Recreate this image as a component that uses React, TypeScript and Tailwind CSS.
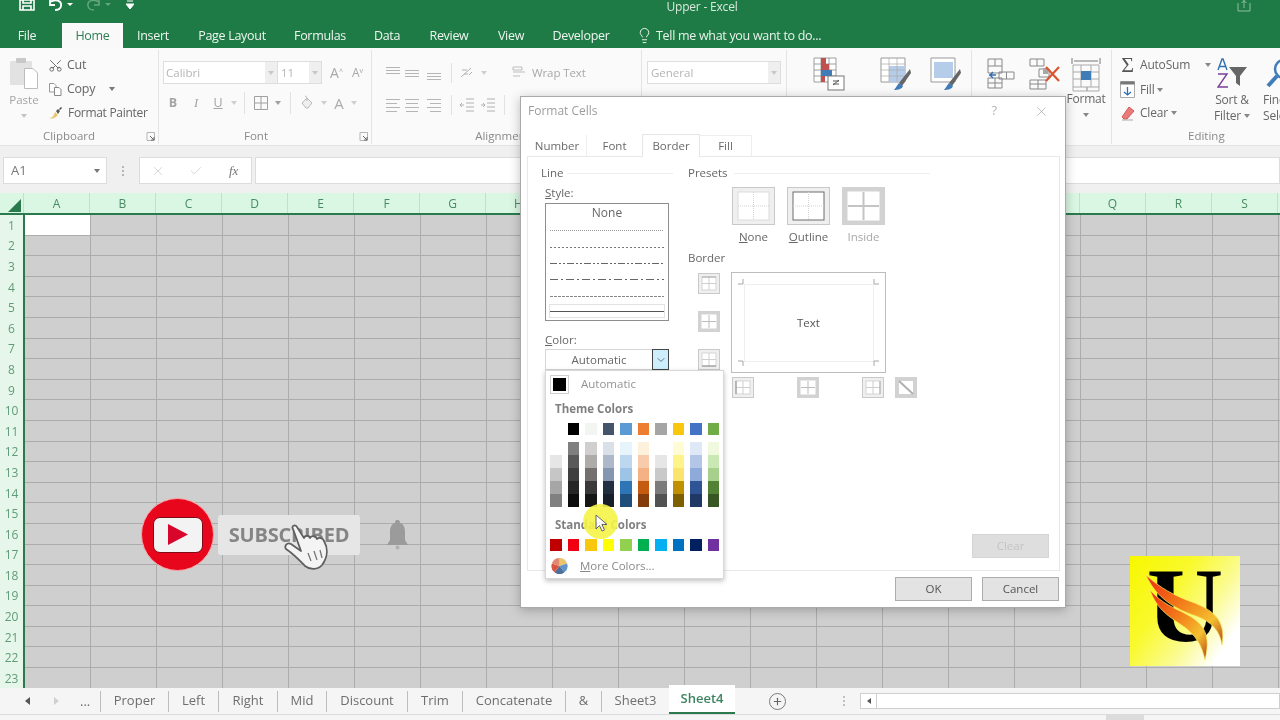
import React from "react";
import { Scissors, Lightbulb, X, Check, ChevronDown, Plus } from "lucide-react";

const COLS = "ABCDEFGHIJKLMNOPQRS".split("");
const ROWS = Array.from({ length: 23 }, (_, i) => i + 1);

const Caret = ({ c = "#9a9a9a" }: { c?: string }) => (
  <svg width="6" height="4" viewBox="0 0 6 4" className="shrink-0"><path d="M0 0h6L3 4z" fill={c} /></svg>
);

const Lines = ({ a }: { a: "l" | "c" | "r" | "t" | "m" | "b" }) => {
  const y = a === "t" ? [2, 5, 8] : a === "b" ? [8, 11, 14] : a === "m" ? [5, 8, 11] : [2, 6, 10, 14];
  return (
    <svg width="16" height="16" viewBox="0 0 16 16" className="shrink-0">
      {y.map((v, i) => {
        const short = y.length === 4 && i % 2 === 1;
        const x1 = a === "r" && short ? 4 : a === "c" && short ? 2 : 1;
        const x2 = a === "l" && short ? 12 : a === "c" && short ? 14 : 15;
        return <path key={v} d={`M${x1} ${v + 0.5}H${x2}`} stroke="#b5b5b5" />;
      })}
    </svg>
  );
};

const Launcher = () => (
  <svg width="9" height="9" viewBox="0 0 9 9"><path d="M1 .5H8.500V8M1 .5V8.500H8.500" fill="none" stroke="#b5b5b5" /><path d="M4 4l4 4M5 8h3V5" stroke="#666" fill="none" /></svg>
);

const Vsep = ({ h = 22 }: { h?: number }) => <div className="w-px bg-[#e2e2e2] shrink-0" style={{ height: h }} />;

const Group = ({ w, label, children, launcher, labelClass }: { w: number; label?: string; children: React.ReactNode; launcher?: boolean; labelClass?: string }) => (
  <div className="flex flex-col shrink-0 border-r border-[#e4e4e4] my-[2px] h-[94px]" style={{ width: w }}>
    <div className="h-[78px] flex">{children}</div>
    <div className={`relative h-[16px] flex items-center justify-center text-[11.500px] text-[#8a8a8a] ${labelClass ?? ""}`}>
      {label}
      {launcher && <span className="absolute right-[3px] top-[4px] flex"><Launcher /></span>}
    </div>
  </div>
);

const TopTab = ({ w, t, active }: { w: number; t: string; active?: boolean }) => (
  <div
    className={`h-[25px] pt-[1px] flex items-center justify-center shrink-0 text-[12.500px] tracking-[-0.3px] ${active ? "bg-[#f9f9f9] text-[#2f7d52]" : "text-[#eef5f0]"}`}
    style={{ width: w }}
  >
    {t}
  </div>
);

const StyleLine = ({ dash, h = 1, c = "#666" }: { dash?: string; h?: number; c?: string }) => (
  <svg width="114" height={h + 2} className="block mx-auto">
    <line x1="0" x2="114" y1={1 + h / 2} y2={1 + h / 2} stroke={c} strokeWidth={h} strokeDasharray={dash} />
  </svg>
);

const Preset = ({ kind }: { kind: "none" | "outline" | "inside" }) => (
  <svg width="43" height="38" viewBox="0 0 43 38" className="block">
    <rect x=".5" y=".5" width="42" height="37" fill={kind === "inside" ? "#d2d2d2" : "#efefef"} stroke={kind === "inside" ? "#d2d2d2" : "#c9c9c9"} />
    <rect x="6" y="5" width="31" height="28" fill="#fff" stroke={kind === "outline" ? "#6d6d6d" : kind === "inside" ? "#fff" : "#dcdcdc"} />
    <path d="M21.500 5V33M6 19H37" stroke={kind === "inside" ? "#c4c4c4" : "#d4d4d4"} strokeWidth={kind === "inside" ? 2 : 1} strokeDasharray={kind === "inside" ? undefined : "1 1"} />
  </svg>
);

const BorderBtn = ({ kind }: { kind: string }) => {
  const grey = kind === "mid" || kind === "v";
  return (
    <svg width="22" height="21" viewBox="0 0 22 21" className="block">
      <rect x=".5" y=".5" width="21" height="20" fill={grey ? "#d2d2d2" : "#efefef"} stroke={grey ? "#d2d2d2" : "#c9c9c9"} />
      <rect x="4" y="4" width="14" height="13" fill="#fff" stroke={grey ? "#fff" : "#d5d5d5"} />
      <path d="M11 4V17M4 10.500H18" stroke={grey ? "#bdbdbd" : "#cfcfcf"} />
      {kind === "top" && <path d="M4 4H18" stroke="#aaa" />}
      {kind === "bottom" && <path d="M4 17H18" stroke="#888" />}
      {kind === "left" && <path d="M4 4V17" stroke="#888" />}
      {kind === "right" && <path d="M18 4V17" stroke="#aaa" />}
      {kind === "diag" && <rect x=".5" y=".5" width="21" height="20" fill="#d2d2d2" stroke="#d2d2d2" />}
      {kind === "diag" && <rect x="4" y="4" width="14" height="13" fill="#fff" />}
      {kind === "diag" && <path d="M4 4L18 17" stroke="#b0b0b0" strokeWidth="2" />}
    </svg>
  );
};

const THEME: (string | null)[][] = [
  ["#ffffff", "#ffffff", "#e6e6e6", "#c6c6c6", "#a6a6a6", "#808080"],
  ["#000000", "#7f7f7f", "#595959", "#3f3f3f", "#262626", "#0d0d0d"],
  ["#f3f5f3", "#d0cece", "#aeabab", "#757070", "#3a3838", "#171616"],
  ["#44546a", "#d9e0e8", "#adb9ca", "#8496b0", "#222f40", "#161f2a"],
  ["#5b9bd5", "#e8f4fb", "#bdd7ee", "#9dc3e6", "#2e75b5", "#1e4e79"],
  ["#ed7d31", "#fdf1dc", "#f8cbad", "#f4b183", "#c55a11", "#833c0b"],
  ["#a5a5a5", "#ffffff", "#e6e6e6", "#c9c9c9", "#7b7b7b", "#525252"],
  ["#f9c80e", "#fffbd5", "#fff48a", "#fbe46c", "#bf9000", "#7f6000"],
  ["#4472c4", "#dfe8f6", "#b4c6e7", "#8eaadb", "#2f5496", "#1f3864"],
  ["#70ad47", "#f0f8dd", "#c9e8b3", "#a8d08d", "#538135", "#375623"],
];
const STD = ["#c00000", "#f00010", "#f9c80e", "#ffff00", "#92d050", "#00b050", "#00b0f0", "#0070c0", "#002060", "#7030a0"];

const SHEETS: [string, number][] = [["Proper", 68], ["Left", 50], ["Right", 59], ["Mid", 49], ["Discount", 81], ["Trim", 55], ["Concatenate", 103], ["&", 36]];

export default function App() {
  return (
    <div className="relative w-[1280px] h-[720px] overflow-hidden bg-white font-['Open_Sans',sans-serif] flex flex-col blur-[0.4px]">
      {/* Title + tabs */}
      <div className="h-[48px] bg-[#1f7b45] shrink-0 flex flex-col">
        <div className="h-[23px] flex items-start">
          <div className="flex items-center h-[11px] gap-[12px] pl-[19px] w-[172px] shrink-0">
            <svg width="16" height="11" viewBox="0 0 16 11"><path d="M1 0H15V10H1zM4 0V3H12V0M4 10V6H12V10" fill="none" stroke="#fff" strokeWidth="1.600" /></svg>
            <svg width="26" height="12" viewBox="0 0 26 12"><path d="M3 2C8-1 15 0 14 6 13.500 9 11 10 8 10M3 0V5H8" fill="none" stroke="#fff" strokeWidth="1.800" /><path d="M20 3h6l-3 3z" fill="#fff" /></svg>
            <svg width="28" height="12" viewBox="0 0 28 12" className="opacity-40"><path d="M14 2C9-1 2 0 3 6 3.500 9 6 10 9 10M14 0V5H9" fill="none" stroke="#cfe5d8" strokeWidth="1.500" /><path d="M20 3h6l-3 3z" fill="#cfe5d8" /></svg>
            <svg width="8" height="11" viewBox="0 0 8 11" className="ml-[1px]"><path d="M1 1H7M0 4h8L4 9z" stroke="#fff" fill="#fff" /></svg>
          </div>
          <div className="w-[1060px] shrink-0 text-center text-[12px] tracking-[-0.2px] text-[#d8e8de] leading-[14px] whitespace-nowrap">Upper - Excel</div>
          <div className="ml-[5px]">
            <svg width="14" height="12" viewBox="0 0 14 12"><path d="M1 3V11H13V3M7 8V0M4.500 3L7 .5 9.500 3" fill="none" stroke="#8fbfa3" /></svg>
          </div>
        </div>
        <div className="h-[25px] flex items-center">
          <div className="w-[8px]" />
          <TopTab w={38} t="File" />
          <div className="w-[16px]" />
          <TopTab w={61} t="Home" active />
          <TopTab w={60} t="Insert" />
          <TopTab w={98} t="Page Layout" />
          <TopTab w={78} t="Formulas" />
          <TopTab w={56} t="Data" />
          <TopTab w={68} t="Review" />
          <TopTab w={56} t="View" />
          <TopTab w={84} t="Developer" />
          <Lightbulb size={17} strokeWidth={1.4} className="text-[#e8f2ec] ml-[13px] shrink-0" />
          <div className="ml-[3px] pt-[1px] text-[12.500px] tracking-[-0.3px] text-[#e8f2ec]">Tell me what you want to do...</div>
        </div>
      </div>

      {/* Ribbon */}
      <div className="h-[98px] shrink-0 bg-[#fafafa] border-b border-[#e3e3e3] flex items-start overflow-hidden">
        <Group w={159} label="Clipboard" launcher labelClass="pr-[20px]">
          <div className="w-[48px] flex flex-col items-center pt-[7px] shrink-0">
            <svg width="30" height="32" viewBox="0 0 30 32">
              <rect x="1" y="4" width="22" height="24" fill="#e2e2e2" rx="1" />
              <rect x="7" y="1" width="10" height="5" fill="#c8c8c8" rx="1" />
              <path d="M15.500 11.500H24L28.500 16V31.500H15.500z" fill="#fff" stroke="#bcbcbc" />
            </svg>
            <div className="text-[11.500px] text-[#a4a4a4] leading-[14px] mt-[4px]">Paste</div>
            <div className="mt-[7px]"><Caret c="#c4c4c4" /></div>
          </div>
          <div className="flex flex-col pt-[3px] text-[#666] text-[12.500px] tracking-[-0.3px]">
            <div className="h-[24px] flex items-center gap-[4px]">
              <Scissors size={15} strokeWidth={1.5} className="text-[#666] -rotate-90" />
              <span>Cut</span>
            </div>
            <div className="h-[24px] flex items-center gap-[5px]">
              <svg width="14" height="14" viewBox="0 0 14 14"><path d="M1.500 1.500H6L8 3.500V10H1.500z" fill="#fff" stroke="#999" /><path d="M6.500 5.500H11L13 7.500V13.500H6.500z" fill="#fff" stroke="#888" /></svg>
              <span>Copy</span>
              <span className="ml-[9px]"><Caret c="#777" /></span>
            </div>
            <div className="h-[23px] flex items-center gap-[5px]">
              <svg width="15" height="14" viewBox="0 0 15 14"><path d="M1 12C5 12 6 9 7 6l3 3c-3 3-5 4-9 3z" fill="#ecc36a" /><path d="M8 5l2-2 2 2-2 3z" fill="#555" /><path d="M11 3l2-2 1 1-2 2z" fill="#444" /></svg>
              <span className="text-[12px]">Format Painter</span>
            </div>
          </div>
        </Group>

        <Group w={213} label="Font" launcher labelClass="pr-[18px]">
          <div className="flex flex-col pt-[11px] pl-[4px] gap-[8px]">
            <div className="flex items-center h-[23px]">
              <div className="w-[115px] h-[23px] border border-[#dedede] bg-white flex items-center justify-between text-[11.500px] text-[#b5b5b5] pl-[2px]">
                Calibri
                <div className="w-[12px] h-full bg-[#efefef] flex items-center justify-center"><Caret c="#c8c8c8" /></div>
              </div>
              <div className="w-[44px] h-[23px] border border-l-0 border-[#dedede] bg-white flex items-center justify-between text-[11.500px] text-[#b5b5b5] pl-[3px]">
                11
                <div className="w-[12px] h-full bg-[#efefef] flex items-center justify-center"><Caret c="#c8c8c8" /></div>
              </div>
              <div className="ml-[6px] w-[17px] text-[14px] text-[#a8a8a8] text-center leading-none">A<sup className="text-[7px]">^</sup></div>
              <div className="ml-[4px] w-[17px] text-[12px] text-[#a8a8a8] text-center leading-none">A<sup className="text-[7px]">v</sup></div>
            </div>
            <div className="flex items-center h-[22px] text-[#a4a4a4]">
              <div className="w-[22px] ml-[-1px] text-center text-[12.500px] font-bold">B</div>
              <div className="w-[22px] ml-[1px] text-center text-[12.500px] italic font-['Liberation_Serif',serif]">I</div>
              <div className="w-[22px] text-center text-[12.500px] underline">U</div>
              <span className="ml-[2px] mr-[7px]"><Caret c="#cfcfcf" /></span>
              <Vsep />
              <svg width="16" height="16" viewBox="0 0 16 16" className="ml-[8px]"><path d="M1.500 1.500H14.500V14.500H1.500zM8 1.500V14.500M1.500 8H14.500" fill="none" stroke="#a0a0a0" /></svg>
              <span className="ml-[6px] mr-[9px]"><Caret c="#a0a0a0" /></span>
              <Vsep />
              <svg width="17" height="16" viewBox="0 0 17 16" className="ml-[8px]"><path d="M3 8l5-5 5 5-4 5H7z" fill="#efefef" stroke="#b8b8b8" /><path d="M6 1C8 1 8 4 8 6" stroke="#b8b8b8" fill="none" /></svg>
              <span className="ml-[5px]"><Caret c="#cfcfcf" /></span>
              <span className="w-[22px] text-center text-[15px] ml-[1px] text-[#ababab]">A</span>
              <span className="ml-[1px]"><Caret c="#cfcfcf" /></span>
            </div>
          </div>
        </Group>

        <Group w={270} label="Alignment" labelClass="pr-[8px]">
          <div className="flex flex-col pt-[14px] pl-[13px] gap-[13px]">
            <div className="flex items-center h-[18px]">
              <Lines a="t" /><span className="w-[3px]" /><Lines a="m" /><span className="w-[6px]" /><Lines a="b" />
              <span className="w-[9px]" /><Vsep h={20} /><span className="w-[7px]" />
              <svg width="16" height="16" viewBox="0 0 16 16"><path d="M2 12L12 3M3 5h5M5 9h4M10 10l3-3" stroke="#b0b0b0" fill="none" /></svg>
              <span className="ml-[6px]"><Caret c="#cfcfcf" /></span>
              <svg width="18" height="16" viewBox="0 0 18 16" className="ml-[25px]"><path d="M1 2h9v3H1zM1 7h12M1 11h7" fill="none" stroke="#bdbdbd" /></svg>
              <span className="ml-[2px] text-[11.500px] text-[#a8a8a8] tracking-[-0.1px]">Wrap Text</span>
            </div>
            <div className="flex items-center h-[18px] mt-[1px]">
              <Lines a="l" /><span className="w-[3px]" /><Lines a="c" /><span className="w-[6px]" /><Lines a="r" />
              <span className="w-[9px]" /><Vsep h={20} /><span className="w-[7px]" />
              <svg width="16" height="16" viewBox="0 0 16 16"><path d="M7 2h8M7 6h8M7 10h8M7 14h8M5 8H1M3 6L1 8l2 2" stroke="#b0b0b0" fill="none" /></svg>
              <span className="w-[5px]" />
              <svg width="16" height="16" viewBox="0 0 16 16"><path d="M7 2h8M7 6h8M7 10h8M7 14h8M1 8h4M3 6l2 2-2 2" stroke="#b0b0b0" fill="none" /></svg>
              <span className="w-[8px]" /><Vsep h={20} />
            </div>
          </div>
        </Group>

        <Group w={145}>
          <div className="pt-[11px] pl-[5px]">
            <div className="w-[134px] h-[23px] border border-[#dedede] bg-white flex items-center justify-between text-[11.500px] text-[#b5b5b5] pl-[3px]">
              General
              <div className="w-[12px] h-full bg-[#efefef] flex items-center justify-center"><Caret c="#c8c8c8" /></div>
            </div>
          </div>
        </Group>

        <Group w={185}>
          <div className="flex pt-[7px] pl-[26px]">
            <svg width="32" height="34" viewBox="0 0 32 34" className="shrink-0">
              <path d="M1 1h22v24H1zM1 7h22M1 13h22M1 19h22M8 1v24M16 1v24" fill="#fff" stroke="#888" strokeWidth=".8" />
              <rect x="8" y="1" width="5" height="6" fill="#c0504d" /><rect x="8" y="7" width="8" height="6" fill="#c0504d" /><rect x="8" y="13" width="11" height="6" fill="#3f7cb8" /><rect x="8" y="19" width="4" height="6" fill="#c0504d" />
              <rect x="15" y="19" width="16" height="14" fill="#fff" stroke="#777" />
              <path d="M20 28l6-5M20 24h6M20 27h6" stroke="#555" />
            </svg>
            <svg width="32" height="34" viewBox="0 0 32 34" className="ml-[35px] shrink-0">
              <path d="M1 1h24v24H1z" fill="#fff" stroke="#999" /><path d="M9 9h16v16H9z" fill="#b5cde8" /><path d="M1 7h24M1 13h24M1 19h24M9 1v24M17 1v24" stroke="#aaa" strokeWidth=".7" />
              <path d="M30 12L19 26l3 3 9-13z" fill="#666" /><path d="M14 33c4 0 8-1 9-4l-4-3c-2 2-3 5-5 7z" fill="#3f7cb8" />
            </svg>
            <svg width="32" height="34" viewBox="0 0 32 34" className="ml-[18px] shrink-0">
              <path d="M1 1h24v24H1z" fill="#fff" stroke="#999" /><path d="M4 5h19v16H4z" fill="#b5cde8" />
              <path d="M30 12L19 26l3 3 9-13z" fill="#666" /><path d="M14 33c4 0 8-1 9-4l-4-3c-2 2-3 5-5 7z" fill="#3f7cb8" />
            </svg>
          </div>
        </Group>

        <Group w={140}>
          <div className="flex pt-[8px] pl-[15px]">
            <svg width="28" height="32" viewBox="0 0 28 32" className="shrink-0">
              <path d="M1 1h14v14H1zM1 8h14M8 1v7M1 20h14v10H1z" fill="none" stroke="#888" />
              <path d="M12 14h15v7H12zM19.500 14v7" fill="none" stroke="#888" />
              <path d="M2 17h7M6 14l-3 3 3 3" stroke="#2f70b0" fill="none" strokeWidth="1.400" />
              <path d="M1 25h14M8 20v10" stroke="#888" />
            </svg>
            <svg width="32" height="32" viewBox="0 0 32 32" className="ml-[14px] shrink-0">
              <path d="M1 1h14v7H1zM8 1v7M10 11h10v8H10zM1 22h16v9H1zM1 26h16M9 22v9" fill="none" stroke="#888" />
              <path d="M14 10h5v6h-5z" fill="#a8a8a8" />
              <path d="M17 9L30 23M30 9L17 23" stroke="#d8552f" strokeWidth="2.200" />
            </svg>
            <div className="ml-[6px] w-[38px] shrink-0 flex flex-col items-center">
              <svg width="30" height="34" viewBox="0 0 30 34" className="shrink-0">
                <path d="M1 0v6M29 0v6M3 3h24" stroke="#777" fill="none" />
                <path d="M2 7h26v22H2zM2 14h26M2 21h26M10 7v22M20 7v22" fill="none" stroke="#aaa" />
                <rect x="10" y="13" width="10" height="9" fill="#3f7cb8" />
                <path d="M2 29v4h14v-4M16 29v4h12v-4" fill="none" stroke="#aaa" />
              </svg>
              <div className="text-[12px] leading-[14px] text-[#666] tracking-[-0.2px]">Format</div>
              <div className="mt-[7px]"><Caret c="#888" /></div>
            </div>
          </div>
        </Group>

        <div className="flex flex-col shrink-0 w-[168px] my-[2px] h-[94px]">
          <div className="h-[78px] flex">
            <div className="flex flex-col pt-[3px] pl-[8px] w-[100px] shrink-0 text-[12px] text-[#666] tracking-[-0.2px]">
              <div className="h-[24px] flex items-center gap-[5px]">
                <span className="w-[15px] text-[22px] leading-none text-[#555] font-['Liberation_Serif',serif] text-center">Σ</span>
                <span>AutoSum</span><span className="ml-[10px]"><Caret c="#888" /></span>
              </div>
              <div className="h-[25px] flex items-center gap-[5px]">
                <svg width="15" height="17" viewBox="0 0 15 17" className="shrink-0"><path d="M.5 .5h14v16H.5z" fill="#fff" stroke="#aaa" /><path d="M.5 .5h14v3H.5z" fill="#777" /><path d="M7.500 6v8M4 11l3.500 3L11 11" stroke="#2f70b0" fill="none" strokeWidth="1.300" /></svg>
                <span>Fill</span><span className="-ml-[2px]"><Caret c="#888" /></span>
              </div>
              <div className="h-[22px] flex items-center gap-[5px]">
                <svg width="15" height="15" viewBox="0 0 15 15" className="shrink-0"><path d="M9 1l5 4-7 8H4L2 11z" fill="#e77b7b" stroke="#d45a5a" /><path d="M2 14h11" stroke="#aaa" /></svg>
                <span>Clear</span><span className="-ml-[2px]"><Caret c="#888" /></span>
              </div>
            </div>
            <div className="flex flex-col items-center w-[40px] shrink-0 pt-[7px] text-[12px] leading-[16px] text-[#666] tracking-[-0.2px]">
              <svg width="30" height="32" viewBox="0 0 30 32" className="shrink-0">
                <path d="M1 13L5 2h1l4 11M2.500 9.500h6" fill="none" stroke="#2f70b0" strokeWidth="1.400" />
                <path d="M1 17h9L1 30h10" fill="none" stroke="#7a3f9a" strokeWidth="1.400" />
                <path d="M12 10H30L23 19V29L19 26V19z" fill="#666" />
              </svg>
              <div className="mt-[3px] whitespace-nowrap">Sort &amp;</div>
              <div className="whitespace-nowrap flex items-center gap-[3px]">Filter<Caret c="#888" /></div>
            </div>
            <div className="flex flex-col pl-[13px] pt-[7px] text-[12px] leading-[16px] text-[#666] tracking-[-0.2px] whitespace-nowrap">
              <svg width="28" height="32" viewBox="0 0 28 32" className="shrink-0"><circle cx="19" cy="12" r="9" fill="none" stroke="#3f7cb8" strokeWidth="2.500" /><path d="M12 19L3 29" stroke="#3f7cb8" strokeWidth="4" /></svg>
              <div className="mt-[3px] -ml-[2px]">Find &amp;</div>
              <div className="-ml-[2px]">Select</div>
            </div>
          </div>
          <div className="h-[16px] flex items-center text-[11.500px] text-[#8a8a8a] pl-[76px]">Editing</div>
        </div>
      </div>

      {/* Formula bar */}
      <div className="h-[47px] shrink-0 bg-[#f0f0f0] flex items-start pt-[11px]">
        <div className="ml-[3px] w-[104px] h-[27px] bg-white border border-[#dcdcdc] flex items-center justify-between pl-[7px] pr-[6px] text-[13px] text-[#777]">
          A1<Caret c="#777" />
        </div>
        <div className="w-[32px] h-[27px] flex flex-col items-center justify-center gap-[2px]">
          {[0, 1, 2].map((i) => <div key={i} className="w-[2px] h-[2px] bg-[#b5b5b5]" />)}
        </div>
        <div className="w-[113px] h-[27px] bg-white border border-[#dcdcdc] flex items-center text-[#c5c5c5]">
          <X size={14} strokeWidth={1.2} className="ml-[11px]" />
          <Check size={14} strokeWidth={1.2} className="ml-[24px]" />
          <span className="ml-[26px] text-[13px] italic font-['Liberation_Serif',serif] text-[#777]">fx</span>
        </div>
        <div className="ml-[3px] flex-1 h-[27px] bg-white border border-[#dcdcdc]" />
      </div>

      {/* Headers */}
      <div className="h-[22px] shrink-0 flex bg-[#d9f7e2] border-b-2 border-[#2a7a4d]">
        <div className="w-[24px] shrink-0 flex items-end justify-end pr-[2px] pb-[1px] border-r border-[#bfe3ca]">
          <svg width="13" height="13" viewBox="0 0 13 13"><path d="M13 0V13H0z" fill="#2a7a4d" /></svg>
        </div>
        {COLS.map((c) => (
          <div key={c} className="w-[66px] shrink-0 pt-[2px] flex items-center justify-center text-[12px] text-[#4b8a66] border-r border-[#bfe3ca]">{c}</div>
        ))}
      </div>

      {/* Sheet */}
      <div className="h-[473px] shrink-0 overflow-hidden bg-[#cfcfcf]">
        {ROWS.map((r) => (
          <div key={r} className="flex h-[20.600px] border-b border-[#acacac]">
            <div className="w-[25px] shrink-0 -mb-px bg-[#e6f6ea] border-r-2 border-[#2a7a4d] flex items-center justify-center pt-[1px] text-[12px] text-[#5f9c78]">{r}</div>
            {COLS.map((c) => (
              <div key={c} className={`w-[66px] shrink-0 border-r border-[#acacac] ${c === "A" && r === 1 ? "bg-white" : ""}`} />
            ))}
          </div>
        ))}
      </div>

      {/* Sheet tabs */}
      <div className="h-[27px] shrink-0 bg-[#f5f5f5] border-b border-[#dcdcdc] flex items-center text-[13px] text-[#6e6e6e]">
        <div className="w-[100px] shrink-0 flex items-center">
          <svg width="5" height="8" viewBox="0 0 5 8" className="ml-[25px]"><path d="M5 0V8L0 4z" fill="#555" /></svg>
          <svg width="5" height="8" viewBox="0 0 5 8" className="ml-[24px]"><path d="M0 0V8L5 4z" fill="#d0d0d0" /></svg>
          <span className="ml-[21px] leading-none">...</span>
        </div>
        {SHEETS.map(([t, w]) => (
          <div key={t} className="shrink-0 h-[21px] border-l border-[#bdbdbd] flex items-center justify-center" style={{ width: w }}>{t}</div>
        ))}
        <div className="shrink-0 w-[68px] h-[21px] border-l border-[#bdbdbd] flex items-center justify-center">Sheet3</div>
        <div className="shrink-0 w-[66px] h-[29px] -mt-[3px] bg-white border-b-2 border-[#2a7a4d] font-semibold text-[#3d8460] flex items-center justify-center">Sheet4</div>
        <div className="ml-[34px] w-[17px] h-[17px] rounded-full border border-[#7a7a7a] flex items-center justify-center shrink-0">
          <Plus size={11} strokeWidth={2.500} className="text-[#666]" />
        </div>
        <div className="ml-[57px] flex flex-col gap-[2px] shrink-0">
          {[0, 1, 2].map((i) => <div key={i} className="w-[2px] h-[2px] bg-[#c0c0c0]" />)}
        </div>
        <div className="ml-[15px] flex-1 h-[16px] bg-white border border-[#cfcfcf] flex items-center">
          <div className="w-[16px] h-full border-r border-[#cfcfcf] flex items-center justify-center">
            <svg width="4" height="6" viewBox="0 0 4 6"><path d="M4 0V6L0 3z" fill="#555" /></svg>
          </div>
        </div>
      </div>

      {/* Status bar */}
      <div className="flex-1 bg-[#f5f5f5] flex items-start justify-end pr-[136px]">
        <div className="w-[38px] h-[5px] bg-[#dcdcdc]" />
      </div>

      {/* YouTube animation overlay */}
      <div className="absolute left-[141px] top-[498px] flex items-center">
        <div className="w-[73px] h-[73px] rounded-full bg-[#e8061c] border border-[#f8a8a8] flex items-center justify-center">
          <div className="w-[50px] h-[36px] rounded-[7px] bg-[#f3f3f3] border border-[#7d0a15] flex items-center justify-center">
            <svg width="21" height="21" viewBox="0 0 21 21"><path d="M1 0L21 10.500 1 21z" fill="#d8062a" /></svg>
          </div>
        </div>
        <div className="ml-[4px] w-[142px] h-[40px] rounded-[3px] bg-[#e6e6e6] flex items-center justify-center text-[20px] font-bold text-[#858585] tracking-[-0.2px]">SUBSCRIBED</div>
        <svg width="21" height="30" viewBox="0 0 21 30" className="ml-[27px]"><path d="M10.500 0C13 0 13 2 13 3 17 4 18 8 18 12V20L21 25H0L3 20V12C3 8 4 4 8 3 8 2 8 0 10.500 0z" fill="#9b9b9b" /><circle cx="10.500" cy="27.500" r="2" fill="#b0b0b0" /></svg>
      </div>
      <svg width="50" height="50" viewBox="0 0 50 50" className="absolute left-[284px] top-[523px]">
        <path d="M9 6C7 3 11 1 13 4L20 15C21 12 25 12 26 15 28 12 32 13 33 16 35 14 39 15 40 18 44 25 44 34 38 42 34 47 26 47 21 43 16 38 11 32 2 26 0 23 3 19 7 21L17 28z" fill="#f4f4f4" stroke="#5f5f5f" strokeWidth="1.800" strokeLinejoin="round" />
        <path d="M24 30L27 38M30 28L33 37M36 27L38 35" stroke="#777" strokeWidth="1.300" />
      </svg>

      {/* Logo */}
      <div className="absolute left-[1130px] top-[556px] w-[110px] h-[110px] bg-[linear-gradient(125deg,#f7f700_0%,#f9f92c_35%,#fbfb90_62%,#ffffff_85%)] overflow-hidden flex items-center justify-center">
        <span className="font-['Liberation_Serif',serif] font-bold text-[106px] leading-none text-black -mt-[10px]">U</span>
        <svg width="110" height="110" viewBox="0 0 110 110" className="absolute left-0 top-0">
          <defs>
            <linearGradient id="fl" x1="0" y1="0" x2="1" y2="1">
              <stop offset="0" stopColor="#ee2a10" />
              <stop offset=".45" stopColor="#f2801a" />
              <stop offset=".75" stopColor="#f4c030" />
              <stop offset="1" stopColor="#b5401a" />
            </linearGradient>
          </defs>
          <path d="M16 19C30 32 45 40 62 46 80 53 97 62 92 89 90 75 82 66 66 60 45 53 26 42 16 19z" fill="url(#fl)" stroke="#f8ec60" strokeWidth=".7" />
          <path d="M20 34C32 48 45 52 56 58 75 68 81 80 75 104 72 90 66 78 50 68 38 60 26 52 20 34z" fill="url(#fl)" stroke="#f8ec60" strokeWidth=".7" />
        </svg>
      </div>

      {/* Format Cells dialog */}
      <div className="absolute left-[520px] top-[96px] w-[546px] h-[512px] bg-white border border-[#a9a9a9] shadow-[0_2px_10px_rgba(0,0,0,0.25)] flex flex-col">
        <div className="h-[28px] shrink-0 flex items-center pl-[7px] text-[12px] text-[#9d9d9d]">
          Format Cells
          <span className="ml-auto text-[13px] text-[#b5b5b5]">?</span>
          <X size={15} strokeWidth={1} className="ml-[37px] mr-[16px] text-[#9d9d9d]" />
        </div>
        <div className="h-[31px] shrink-0 flex items-end pl-[7px] text-[11.500px] text-[#6a6a6a] relative z-10">
          <div className="w-[58px] h-[21px] flex items-center justify-center">Number</div>
          <div className="w-[56px] h-[21px] flex items-center justify-center border-l border-[#eeeeee]">Font</div>
          <div className="w-[58px] h-[23px] mb-[-1px] bg-white border border-b-0 border-[#e6e6e6] flex items-center justify-center">Border</div>
          <div className="w-[52px] h-[21px] flex items-center justify-center border-r border-t border-[#eeeeee]">Fill</div>
        </div>
        <div className="ml-[6px] mr-[5px] h-[415px] shrink-0 border border-[#e8e8e8] flex">
          {/* left column */}
          <div className="w-[160px] shrink-0 pl-[13px] pt-[8px] text-[11.500px] text-[#666] flex flex-col">
            <div className="h-[16px] flex items-center gap-[4px]">Line<div className="w-[106px] h-px bg-[#eeeeee]" /></div>
            <div className="pl-[4px] mt-[3px] h-[18px] flex items-center"><span><u>S</u>tyle:</span></div>
            <div className="ml-[4px] mt-[1px] w-[124px] h-[118px] border border-[#8e8e8e] flex flex-col pt-[1px]">
              <div className="h-[15px] flex items-center justify-center text-[12px]">None</div>
              <div className="mt-[9px]"><StyleLine dash="1 1" c="#999" /></div>
              <div className="mt-[14px]"><StyleLine dash="2 2" c="#777" /></div>
              <div className="mt-[13px]"><StyleLine dash="7 2 2 2 2 2" /></div>
              <div className="mt-[13px]"><StyleLine dash="8 3 2 3" /></div>
              <div className="mt-[14px]"><StyleLine dash="3 1" c="#888" /></div>
              <div className="mt-[6px] mx-[3px] h-[14px] border border-[#e3e3e3] flex items-center"><div className="w-full h-px bg-[#555]" /></div>
            </div>
            <div className="pl-[4px] mt-[10px] h-[18px] flex items-center"><span><u>C</u>olor:</span></div>
            <div className="ml-[4px] w-[124px] h-[21px] border border-[#d5d5d5] flex items-center justify-between">
              <span className="w-[106px] text-center text-[#666]">Automatic</span>
              <div className="w-[17px] h-[21px] -mr-px bg-[#cdeefd] border border-[#444] flex items-center justify-center">
                <ChevronDown size={12} strokeWidth={1.6} className="text-[#555]" />
              </div>
            </div>
          </div>
          {/* right column */}
          <div className="flex-1 flex flex-col pt-[8px] text-[11.500px] text-[#666]">
            <div className="h-[16px] flex items-center gap-[6px]">Presets<div className="w-[196px] h-px bg-[#eeeeee]" /></div>
            <div className="ml-[44px] mt-[6px] flex gap-[12px]">
              {(["none", "outline", "inside"] as const).map((k) => (
                <div key={k} className="w-[43px] flex flex-col items-center">
                  <Preset kind={k} />
                  <div className={`mt-[4px] h-[16px] flex items-center whitespace-nowrap ${k === "inside" ? "text-[#a8a8a8]" : ""}`}>
                    {k === "none" && <span><u>N</u>one</span>}
                    {k === "outline" && <span><u>O</u>utline</span>}
                    {k === "inside" && <span>Inside</span>}
                  </div>
                </div>
              ))}
            </div>
            <div className="mt-[5px] h-[16px] flex items-center">Border</div>
            <div className="flex mt-[6px]">
              <div className="ml-[10px] w-[22px] flex flex-col pt-[1px] gap-[17px]">
                <BorderBtn kind="top" />
                <BorderBtn kind="mid" />
                <BorderBtn kind="bottom" />
              </div>
              <div className="ml-[11px] w-[155px] h-[101px] border border-[#bdbdbd] flex items-center justify-center text-[#555] relative">
                <div className="w-[130px] h-[78px] border border-[#eeeeee] flex items-center justify-center">Text</div>
                <svg width="153" height="99" viewBox="0 0 153 99" className="absolute left-0 top-0">
                  <path d="M11 6V11H6M142 6V11H147M11 93V88H6M142 93V88H147" fill="none" stroke="#a8a8a8" />
                </svg>
              </div>
            </div>
            <div className="flex ml-[44px] mt-[4px]">
              <BorderBtn kind="left" />
              <div className="ml-[43px]"><BorderBtn kind="v" /></div>
              <div className="ml-[43px]"><BorderBtn kind="right" /></div>
              <div className="ml-[11px]"><BorderBtn kind="diag" /></div>
            </div>
            <div className="mt-auto self-end mb-[12px] mr-[10px] w-[77px] h-[24px] bg-[#dedede] border border-[#d5d5d5] flex items-center justify-center text-[#c4c4c4]">Clear</div>
          </div>
        </div>
        <div className="flex justify-end gap-[10px] pr-[6px] mt-[6px] text-[11.500px] text-[#555]">
          <div className="w-[77px] h-[24px] bg-[#e3e3e3] border border-[#adadad] flex items-center justify-center">OK</div>
          <div className="w-[77px] h-[24px] bg-[#e3e3e3] border border-[#adadad] flex items-center justify-center">Cancel</div>
        </div>

        {/* Colour popup */}
        <div className="absolute left-[24px] top-[273px] w-[179px] h-[209px] bg-white border border-[#d8d8d8] shadow-[0_2px_5px_rgba(0,0,0,0.25)] flex flex-col text-[11.500px] text-[#8a8a8a]">
          <div className="h-[26px] shrink-0 flex items-center pl-[4px]">
            <div className="w-[19px] h-[19px] border border-[#d0d0d0] p-[2px]"><div className="w-full h-full bg-black" /></div>
            <span className="ml-[12px] text-[#949494]">Automatic</span>
          </div>
          <div className="h-[24px] shrink-0 pl-[9px] flex items-center font-bold text-[#808080] text-[11.500px]">Theme Colors</div>
          <div className="flex pl-[1px] pt-[2px]">
            {THEME.map((col, i) => (
              <div key={i} className="w-[17.500px] shrink-0 flex flex-col items-center">
                <div className="w-[11.500px] h-[12px]" style={{ background: col[0] ?? "#fff" }} />
                <div className="w-[11.500px] mt-[7px] flex flex-col">
                  {col.slice(1).map((s, j) => <div key={j} className="h-[13px]" style={{ background: s ?? "#fff" }} />)}
                </div>
              </div>
            ))}
          </div>
          <div className="h-[30px] shrink-0 pl-[9px] pt-[6px] flex items-center font-bold text-[#808080] text-[11.500px]">Standard Colors</div>
          <div className="flex pl-[1px] pt-[2px]">
            {STD.map((s) => (
              <div key={s} className="w-[17.500px] shrink-0 flex justify-center">
                <div className="w-[11.500px] h-[11.500px]" style={{ background: s }} />
              </div>
            ))}
          </div>
          <div className="flex items-center pl-[4px] mt-[5px] h-[20px]">
            <svg width="17" height="16" viewBox="0 0 16 16" className="ml-[1px]">
              <path d="M8 8V0A8 8 0 0 1 15.600 5.500z" fill="#e9c46a" /><path d="M8 8L15.600 5.500A8 8 0 0 1 13 14.300z" fill="#5f93c9" /><path d="M8 8L13 14.300A8 8 0 0 1 3 14.300z" fill="#4d6f99" /><path d="M8 8L3 14.300A8 8 0 0 1 .4 5.500z" fill="#d8553f" /><path d="M8 8L.4 5.500A8 8 0 0 1 8 0z" fill="#e08a72" />
            </svg>
            <span className="ml-[12px]"><u>M</u>ore Colors...</span>
          </div>
        </div>
      </div>

      {/* Pointer highlight */}
      <div className="absolute left-[583px] top-[504px] w-[35px] h-[35px] rounded-full bg-[#f5f548] opacity-90 flex items-center justify-center">
        <svg width="13" height="18" viewBox="0 0 13 18" className="ml-[2px] mt-[3px]"><path d="M1 1V15L4.500 11.500 7 17 9.500 16 7 10.500H12z" fill="#fff" stroke="#555" strokeWidth="1" /></svg>
      </div>
    </div>
  );
}
